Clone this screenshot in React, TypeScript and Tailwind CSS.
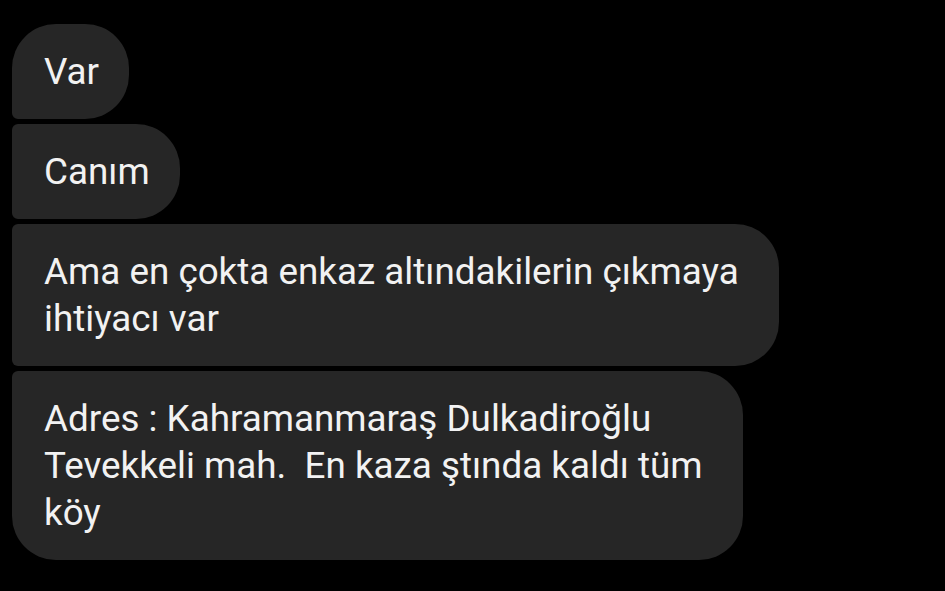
const messages = [
  { lines: ["Var"], corners: "rounded-[44px] rounded-bl-[6px]", pr: "pr-[30px]" },
  { lines: ["Canım"], corners: "rounded-[44px] rounded-tl-[6px] rounded-bl-[6px]", pr: "pr-[30px]" },
  {
    lines: ["Ama en çokta enkaz altındakilerin çıkmaya", "ihtiyacı var"],
    corners: "rounded-[44px] rounded-tl-[6px] rounded-bl-[6px]",
    pr: "pr-10",
  },
  {
    lines: ["Adres : Kahramanmaraş Dulkadiroğlu", "Tevekkeli mah.  En kaza ştında kaldı tüm", "köy"],
    corners: "rounded-[44px] rounded-tl-[6px]",
    pr: "pr-10",
  },
];

export default function App() {
  return (
    <div className="w-[945px] h-[591px] bg-black overflow-hidden">
      <div className="flex flex-col items-start gap-[5px] pt-6 pl-3">
        {messages.map((m, i) => (
          <div
            key={i}
            className={`bg-[#262626] text-[#f2f2f2] pl-8 py-6 ${m.pr} ${m.corners} text-[36.8px] leading-[47px] whitespace-pre font-['Roboto',sans-serif]`}
          >
            {m.lines.map((l, j) => (
              <div key={j}>{l}</div>
            ))}
          </div>
        ))}
      </div>
    </div>
  );
}
